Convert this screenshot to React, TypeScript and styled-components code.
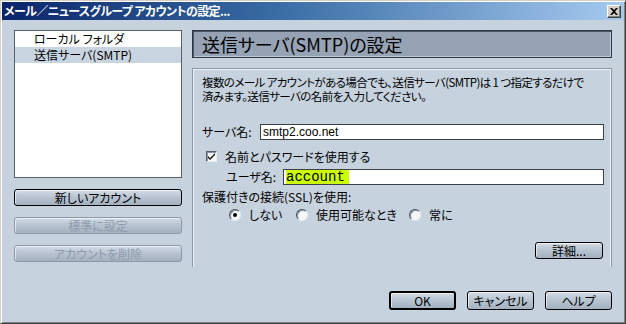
import React from 'react';
import styled, {createGlobalStyle} from 'styled-components';

const GlobalStyle = createGlobalStyle`
  html, body {
    margin: 0;
    padding: 0;
    background: #c6d2de;
  }
  body {
    font-family: "Noto Sans CJK JP", "Liberation Sans", sans-serif;
    font-size: 12px;
    font-feature-settings: "palt";
    color: #000;
  }
`;

const Window = styled.div`
  width: 626px;
  height: 324px;
  box-sizing: border-box;
  padding: 1px;
  background: #d4d0c8;
  border: 1px solid;
  border-color: #d4d0c8 #404040 #404040 #d4d0c8;
  box-shadow: inset 1px 1px #ffffff, inset -1px -1px #808080;
  display: flex;
  flex-direction: column;
`;

const TitleBar = styled.div`
  height: 18px;
  display: flex;
  align-items: center;
  justify-content: space-between;
  padding: 0 3px 0 2px;
  background: linear-gradient(to right, #0a246a 0%, #3a6ea5 45%, #a6caf0 100%);
`;

const Title = styled.div`
  color: #fff;
  font-weight: bold;
  font-size: 12px;
  line-height: 18px;
  letter-spacing: -0.6px;
`;

const CloseButton = styled.div`
  width: 14px;
  height: 13px;
  box-sizing: border-box;
  background: #d4d0c8;
  border: 1px solid;
  border-color: #fff #404040 #404040 #fff;
  box-shadow: inset -1px -1px #808080;
  display: flex;
  align-items: center;
  justify-content: center;
`;

const Body = styled.div`
  flex: 1;
  background: #c6d2de;
  padding: 10px 12px 0 12px;
  display: flex;
  flex-direction: column;
`;

const Main = styled.div`
  display: flex;
  gap: 10px;
  height: 237px;
`;

const Sidebar = styled.div`
  width: 168px;
  flex-shrink: 0;
  display: flex;
  flex-direction: column;
`;

const AccountList = styled.div`
  height: 148px;
  box-sizing: border-box;
  background: #fff;
  border: 1px solid #5a5e66;
`;

const ListItem = styled.div<{$selected?: boolean}>`
  height: 16px;
  line-height: 16px;
  padding-left: 19px;
  background: ${p => (p.$selected ? '#c8d4e0' : 'transparent')};
`;

const SideButtons = styled.div`
  margin-top: 11px;
  display: flex;
  flex-direction: column;
  gap: 11px;
`;

const Button = styled.div<{$width?: number; $height?: number; $disabled?: boolean; $default?: boolean}>`
  width: ${p => (p.$width ? `${p.$width}px` : '100%')};
  height: ${p => p.$height || 17}px;
  box-sizing: border-box;
  border: ${p => (p.$default ? 2 : 1)}px solid ${p => (p.$disabled ? '#8a98a8' : '#000')};
  border-radius: 3px;
  background: linear-gradient(to bottom, #d4dde7 0%, #b9c5d2 45%, #a3b1c0 100%);
  box-shadow: inset 1px 1px rgba(255, 255, 255, 0.6);
  color: ${p => (p.$disabled ? '#8d9bab' : '#000')};
  display: flex;
  align-items: center;
  justify-content: center;
  line-height: 1;
`;

const Content = styled.div`
  flex: 1;
  min-width: 0;
  display: flex;
  flex-direction: column;
`;

const PageHeader = styled.div`
  height: 28px;
  box-sizing: border-box;
  background: #95a3b4;
  border: 1px solid #2e3644;
  box-shadow: inset 1px 1px #4a5566, inset -1px -1px #bfc9d4;
  font-size: 18px;
  line-height: 26px;
  padding-left: 9px;
`;

const GroupBox = styled.div`
  margin-top: 10px;
  flex: 1;
  box-sizing: border-box;
  border: 1px solid #8996a5;
  border-bottom: none;
  box-shadow: inset 1px 1px #eef2f6, inset -1px 0 #eef2f6;
  padding: 6px 7px 4px 9px;
  display: flex;
  flex-direction: column;
`;

const Description = styled.div`
  font-size: 11.5px;
  line-height: 14px;
  letter-spacing: -0.6px;
  white-space: nowrap;
`;

const FieldRow = styled.div<{$indent?: number; $top: number}>`
  display: flex;
  align-items: center;
  line-height: 16px;
  margin-top: ${p => p.$top}px;
  padding-left: ${p => p.$indent || 0}px;
`;

const FieldLabel = styled.div<{$width: number}>`
  width: ${p => p.$width}px;
  flex-shrink: 0;
`;

const TextInput = styled.div<{$mono?: boolean}>`
  flex: 1;
  height: 16px;
  box-sizing: border-box;
  background: #fff;
  border: 1px solid #3a3f48;
  padding-left: 2px;
  display: flex;
  align-items: center;
  font-family: ${p => (p.$mono ? '"Liberation Mono", monospace' : '"Liberation Sans", sans-serif')};
  font-size: ${p => (p.$mono ? 14 : 12)}px;
`;

const Highlight = styled.span`
  background: #ccff00;
  padding-right: 4px;
  line-height: 14px;
`;

const CheckRow = styled.div`
  display: flex;
  align-items: center;
  gap: 8px;
  line-height: 15px;
  margin-top: 9px;
  padding-left: 4px;
`;

const CheckBox = styled.div`
  width: 11px;
  height: 11px;
  box-sizing: border-box;
  background: #f4f6f8;
  border: 1px solid;
  border-color: #5a606a #e8edf2 #e8edf2 #5a606a;
  box-shadow: inset 1px 1px #8c96a2;
  display: flex;
  align-items: center;
  justify-content: center;
`;

const SectionLabel = styled.div`
  margin-top: 5px;
  line-height: 14px;
`;

const RadioRow = styled.div`
  display: flex;
  align-items: center;
  line-height: 15px;
  margin-top: 3px;
  padding-left: 27px;
`;

const RadioOption = styled.div<{$width: number}>`
  width: ${p => p.$width}px;
  display: flex;
  align-items: center;
  gap: 8px;
`;

const Radio = styled.div<{$checked?: boolean}>`
  width: 12px;
  height: 12px;
  box-sizing: border-box;
  border-radius: 50%;
  background: #f4f6f8;
  border: 1px solid;
  border-color: #4a5058 #e8edf2 #e8edf2 #4a5058;
  box-shadow: inset 1px 1px #8c96a2;
  display: flex;
  align-items: center;
  justify-content: center;
  &::after {
    content: '';
    display: ${p => (p.$checked ? 'block' : 'none')};
    width: 4px;
    height: 4px;
    border-radius: 50%;
    background: #000;
  }
`;

const GroupFooter = styled.div`
  margin-top: auto;
  display: flex;
  justify-content: flex-end;
  padding-right: 1px;
  height: 21px;
`;

const Footer = styled.div`
  margin-top: 24px;
  display: flex;
  justify-content: flex-end;
  gap: 11px;
`;

function App() {
  return (
    <>
      <GlobalStyle/>
      <Window>
        <TitleBar>
          <Title>メール／ニュースグループ アカウントの設定...</Title>
          <CloseButton>
            <svg width="8" height="7" viewBox="0 0 8 7">
              <path d="M0 0h2l2 2 2-2h2L5 3.5 8 7H6L4 5 2 7H0l3-3.5z" fill="#000"/>
            </svg>
          </CloseButton>
        </TitleBar>
        <Body>
          <Main>
            <Sidebar>
              <AccountList>
                <ListItem>ローカル フォルダ</ListItem>
                <ListItem $selected>送信サーバ(SMTP)</ListItem>
              </AccountList>
              <SideButtons>
                <Button>新しいアカウント</Button>
                <Button $disabled>標準に設定</Button>
                <Button $disabled>アカウントを削除</Button>
              </SideButtons>
            </Sidebar>
            <Content>
              <PageHeader>送信サーバ(SMTP)の設定</PageHeader>
              <GroupBox>
                <Description>
                  複数のメール アカウントがある場合でも、送信サーバ(SMTP)は 1 つ指定するだけで
                  <br/>
                  済みます。送信サーバの名前を入力してください。
                </Description>
                <FieldRow $top={21}>
                  <FieldLabel $width={58}>サーバ名:</FieldLabel>
                  <TextInput>smtp2.coo.net</TextInput>
                </FieldRow>
                <CheckRow>
                  <CheckBox>
                    <svg width="7" height="7" viewBox="0 0 7 7">
                      <path d="M0 3l2 2 5-5v2L2 7 0 5z" fill="#1a1a1a"/>
                    </svg>
                  </CheckBox>
                  名前とパスワードを使用する
                </CheckRow>
                <FieldRow $top={5} $indent={24}>
                  <FieldLabel $width={57}>ユーザ名:</FieldLabel>
                  <TextInput $mono><Highlight>account</Highlight></TextInput>
                </FieldRow>
                <SectionLabel>保護付きの接続(SSL)を使用:</SectionLabel>
                <RadioRow>
                  <RadioOption $width={67}><Radio $checked/>しない</RadioOption>
                  <RadioOption $width={113}><Radio/>使用可能なとき</RadioOption>
                  <RadioOption $width={60}><Radio/>常に</RadioOption>
                </RadioRow>
                <GroupFooter>
                  <Button $width={68}>詳細...</Button>
                </GroupFooter>
              </GroupBox>
            </Content>
          </Main>
          <Footer>
            <Button $width={67} $height={19} $default>OK</Button>
            <Button $width={67} $height={19}>キャンセル</Button>
            <Button $width={67} $height={19}>ヘルプ</Button>
          </Footer>
        </Body>
      </Window>
    </>
  );
}

export default App;
